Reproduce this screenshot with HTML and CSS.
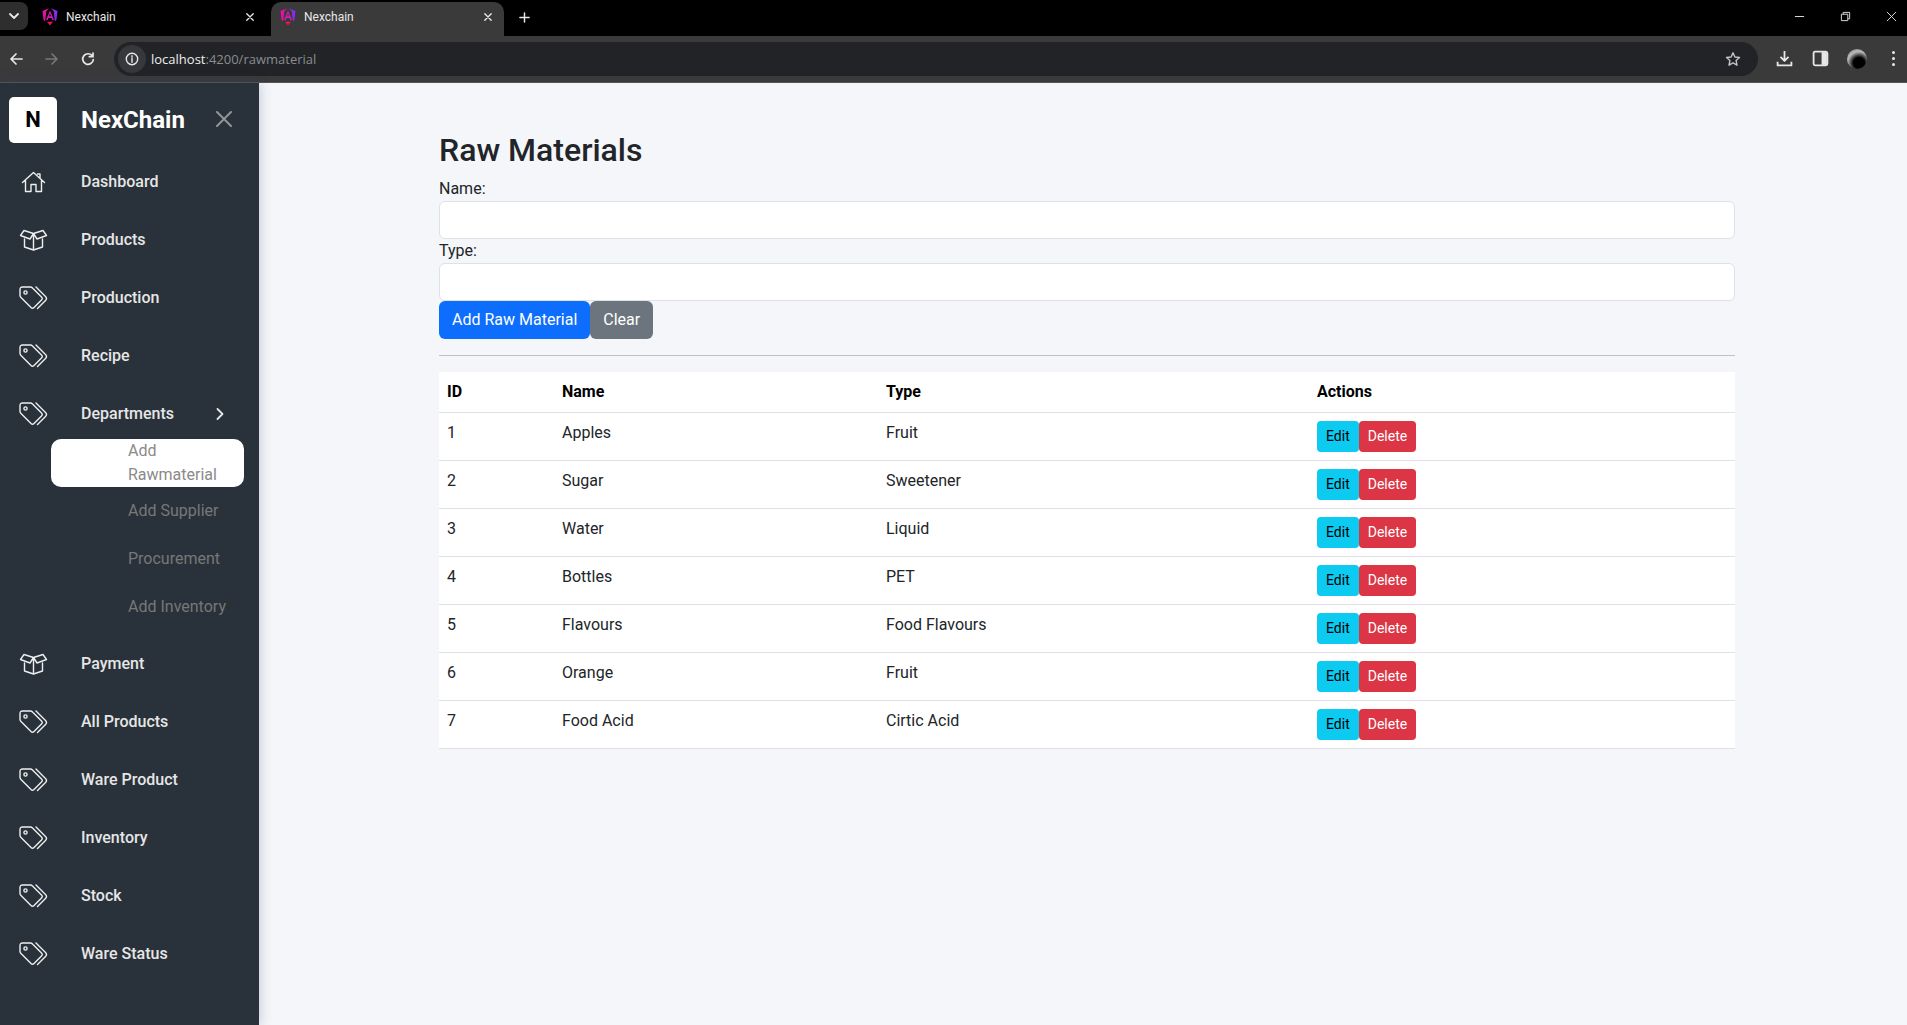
FILE: index.html
```html
<!DOCTYPE html>
<html lang="en">
<head>
    <meta charset="UTF-8">
    <meta name="viewport" content="width=device-width, initial-scale=1.0">
    <title>Nexchain</title>
    <link rel="stylesheet" href="styles.css">
</head>
<body>
    <svg class="icon-defs" aria-hidden="true">
        <defs>
            <symbol id="i-angular" viewBox="0 0 16 18">
                <path fill="#ea0fa4" d="M.5 3 7 .3 4.200 3.500 3.200 13.200 1.600 12Z"/>
                <path fill="#8a2be6" d="M15.500 3 9 .3 11.800 3.500 12.800 13.200 14.400 12Z"/>
                <path fill="#d41ab4" fill-rule="evenodd" d="M8 2.500 12 12H10.300L9.500 10H6.500L5.700 12H4ZM8 5.500 7 8.300H9Z"/>
                <path fill="#ee1058" d="M5 13.800H11L8 17.600Z"/>
            </symbol>
            <symbol id="i-house" viewBox="0 0 24 22">
                <path d="M1 11.500 12 1.500 23 11.500M18.500 7V3H16M4 9.500V20.500H9.500V13.500H14.500V20.500H20V9.500"/>
            </symbol>
            <symbol id="i-box" viewBox="0 0 28 22">
                <path d="M5 10V18L14 21 23 18V10M14 4.500V21M14 4.500 4.500 1.500 1 6.500 10.500 10ZM14 4.500 23.500 1.500 27 6.500 17.500 10Z"/>
            </symbol>
            <symbol id="i-tag" viewBox="0 0 29 24">
                <path d="M1 3.500Q1 1 3.500 1H11.500Q12.500 1 13.500 2L22.500 11Q24 12.500 22.500 14L15 21.500Q13.500 23 12 21.500L2 11.500Q1 10.500 1 9.500Z"/>
                <circle cx="6.500" cy="6.500" r="1.600"/>
                <path d="M17 1 26.500 10.500Q28.500 12.500 26.500 14.500L18.500 22.500"/>
            </symbol>
        </defs>
    </svg>

    <div class="browser-tabs">
        <div class="tab-menu">
            <svg viewBox="0 0 10 6"><path d="M1 1 5 5 9 1"/></svg>
        </div>
        <div class="tab">
            <svg class="favicon"><use href="#i-angular"/></svg>
            <span class="tab-title">Nexchain</span>
            <svg class="tab-close" viewBox="0 0 10 10"><path d="M1 1 9 9M9 1 1 9"/></svg>
        </div>
        <div class="tab tab-active">
            <svg class="favicon"><use href="#i-angular"/></svg>
            <span class="tab-title">Nexchain</span>
            <svg class="tab-close" viewBox="0 0 10 10"><path d="M1 1 9 9M9 1 1 9"/></svg>
        </div>
        <svg class="tab-new" viewBox="0 0 12 12"><path d="M6 1V11M1 6H11"/></svg>
        <div class="window-controls">
            <svg viewBox="0 0 12 12"><path d="M1 6H11"/></svg>
            <svg viewBox="0 0 12 12"><path d="M1.500 3.500H8.500V10.500H1.500ZM3.500 3.500V1.500H10.500V8.500H8.500"/></svg>
            <svg viewBox="0 0 12 12"><path d="M1 1 11 11M11 1 1 11"/></svg>
        </div>
    </div>

    <div class="browser-toolbar">
        <svg class="nav-btn" viewBox="0 0 14 14"><path d="M13 7H2M7 2 2 7 7 12"/></svg>
        <svg class="nav-btn nav-btn-off" viewBox="0 0 14 14"><path d="M1 7H12M7 2 12 7 7 12"/></svg>
        <svg class="nav-btn" viewBox="0 0 14 14"><path d="M11.500 4.200A5.300 5.300 0 1 0 12.300 7.500M12 1V4.700H8.300"/></svg>
        <div class="omnibox">
            <div class="site-info">
                <svg viewBox="0 0 14 14"><circle cx="7" cy="7" r="5.700"/><path d="M7 6.300V10.200M7 3.700V5"/></svg>
            </div>
            <span class="url-host">localhost</span><span class="url-path">:4200/rawmaterial</span>
            <svg class="star" viewBox="0 0 16 16"><path d="M8 1.800 9.900 6 14.500 6.500 11.100 9.600 12 14.200 8 11.900 4 14.200 4.900 9.600 1.500 6.500 6.100 6Z"/></svg>
        </div>
        <div class="toolbar-right">
            <svg viewBox="0 0 16 16"><path d="M8 1V10M4.200 6.500 8 10.300 11.800 6.500M1.500 11V14.500H14.500V11"/></svg>
            <svg class="panel-icon" viewBox="0 0 16 16"><rect class="panel-frame" x="1.500" y="1.500" width="13" height="13" rx="1.500"/><rect class="panel-fill" x="9" y="2" width="5" height="12"/></svg>
            <div class="avatar"></div>
            <div class="menu-dots"><i></i><i></i><i></i></div>
        </div>
    </div>

    <div class="app">
        <aside class="sidebar">
            <div class="sidebar-head">
                <div class="logo">N</div>
                <span class="brand">NexChain</span>
                <svg class="sidebar-close" viewBox="0 0 16 16"><path d="M1 1 15 15M15 1 1 15"/></svg>
            </div>
            <ul class="nav-list">
                <li class="nav-item"><svg class="nav-icon icon-house"><use href="#i-house"/></svg>Dashboard</li>
                <li class="nav-item"><svg class="nav-icon icon-box"><use href="#i-box"/></svg>Products</li>
                <li class="nav-item"><svg class="nav-icon"><use href="#i-tag"/></svg>Production</li>
                <li class="nav-item"><svg class="nav-icon"><use href="#i-tag"/></svg>Recipe</li>
                <li class="nav-item">
                    <svg class="nav-icon"><use href="#i-tag"/></svg>Departments
                    <svg class="nav-arrow" viewBox="0 0 8 12"><path d="M1.500 1 6.500 6 1.500 11"/></svg>
                </li>
                <li>
                    <ul class="sub-list">
                        <li class="sub-item sub-active">Add Rawmaterial</li>
                        <li class="sub-item">Add Supplier</li>
                        <li class="sub-item">Procurement</li>
                        <li class="sub-item">Add Inventory</li>
                    </ul>
                </li>
                <li class="nav-item"><svg class="nav-icon icon-box"><use href="#i-box"/></svg>Payment</li>
                <li class="nav-item"><svg class="nav-icon"><use href="#i-tag"/></svg>All Products</li>
                <li class="nav-item"><svg class="nav-icon"><use href="#i-tag"/></svg>Ware Product</li>
                <li class="nav-item"><svg class="nav-icon"><use href="#i-tag"/></svg>Inventory</li>
                <li class="nav-item"><svg class="nav-icon"><use href="#i-tag"/></svg>Stock</li>
                <li class="nav-item"><svg class="nav-icon"><use href="#i-tag"/></svg>Ware Status</li>
            </ul>
        </aside>

        <main class="content">
            <h1>Raw Materials</h1>
            <form class="material-form">
                <label for="name">Name:</label>
                <input type="text" id="name">
                <label for="type">Type:</label>
                <input type="text" id="type">
                <div class="form-buttons">
                    <button type="button" class="btn btn-primary">Add Raw Material</button>
                    <button type="button" class="btn btn-secondary">Clear</button>
                </div>
            </form>
            <hr>
            <table class="material-table">
                <thead>
                    <tr><th>ID</th><th>Name</th><th>Type</th><th>Actions</th></tr>
                </thead>
                <tbody>
                    <tr><td>1</td><td>Apples</td><td>Fruit</td><td><button class="btn-sm btn-info">Edit</button><button class="btn-sm btn-danger">Delete</button></td></tr>
                    <tr><td>2</td><td>Sugar</td><td>Sweetener</td><td><button class="btn-sm btn-info">Edit</button><button class="btn-sm btn-danger">Delete</button></td></tr>
                    <tr><td>3</td><td>Water</td><td>Liquid</td><td><button class="btn-sm btn-info">Edit</button><button class="btn-sm btn-danger">Delete</button></td></tr>
                    <tr><td>4</td><td>Bottles</td><td>PET</td><td><button class="btn-sm btn-info">Edit</button><button class="btn-sm btn-danger">Delete</button></td></tr>
                    <tr><td>5</td><td>Flavours</td><td>Food Flavours</td><td><button class="btn-sm btn-info">Edit</button><button class="btn-sm btn-danger">Delete</button></td></tr>
                    <tr><td>6</td><td>Orange</td><td>Fruit</td><td><button class="btn-sm btn-info">Edit</button><button class="btn-sm btn-danger">Delete</button></td></tr>
                    <tr><td>7</td><td>Food Acid</td><td>Cirtic Acid</td><td><button class="btn-sm btn-info">Edit</button><button class="btn-sm btn-danger">Delete</button></td></tr>
                </tbody>
            </table>
        </main>
    </div>
</body>
</html>
```

FILE: styles.css
```css
* {
    box-sizing: border-box;
}

body {
    font-family: Roboto, sans-serif;
    font-size: 16px;
    line-height: 24px;
    color: #212529;
    margin: 0;
    height: 100vh;
    overflow: hidden;
    display: flex;
    flex-direction: column;
    background-color: #f4f6f9;
}

ul {
    list-style: none;
    margin: 0;
    padding: 0;
}

svg {
    fill: none;
    stroke: currentColor;
    stroke-linecap: round;
    stroke-linejoin: round;
}

.icon-defs {
    width: 0;
    height: 0;
    position: absolute;
}

/* browser tab strip */
.browser-tabs {
    height: 36px;
    flex: none;
    background-color: #000;
    color: #e8e8e8;
    display: flex;
    align-items: flex-end;
    font-size: 12px;
}

.tab-menu {
    width: 28px;
    height: 28px;
    margin-top: 2px;
    border-radius: 0 8px 8px 0;
    background-color: #2e2e2e;
    display: flex;
    align-items: center;
    justify-content: center;
    align-self: flex-start;
}

.tab-menu svg {
    width: 10px;
    height: 6px;
    stroke-width: 1.8;
}

.tab {
    width: 243px;
    height: 34px;
    display: flex;
    align-items: center;
    padding: 0 17px 4px 14px;
}

.tab-active {
    width: 233px;
    padding: 0 12px 4px 9px;
    background-color: #3a3a3a;
    border-radius: 10px 10px 0 0;
}

.favicon {
    width: 16px;
    height: 18px;
    stroke: none;
    margin-right: 8px;
    flex: none;
}

.tab-title {
    flex: 1;
    line-height: 16px;
}

.tab-close {
    width: 8px;
    height: 8px;
    stroke-width: 1.7;
    flex: none;
}

.tab-new {
    width: 11px;
    height: 11px;
    margin: 0 0 13px 15px;
    stroke-width: 1.6;
}

.window-controls {
    margin-left: auto;
    height: 36px;
    display: flex;
    align-items: center;
    gap: 35px;
    padding: 0 10px 4px 0;
}

.window-controls svg {
    width: 11px;
    height: 11px;
    stroke-width: 1;
    stroke-linecap: butt;
}

/* browser address bar */
.browser-toolbar {
    height: 47px;
    flex: none;
    background-color: #3a3a3a;
    border-bottom: 1px solid #555;
    display: flex;
    align-items: center;
    color: #e8e8e8;
    padding: 0 0 1px 9px;
}

.nav-btn {
    width: 14px;
    height: 14px;
    margin-right: 22px;
    stroke-width: 1.7;
    flex: none;
}

.nav-btn-off {
    color: #777;
}

.omnibox {
    width: 1644px;
    height: 34px;
    margin-left: -3px;
    border-radius: 17px;
    background-color: #212327;
    display: flex;
    align-items: center;
    padding: 0 17px 0 4px;
    font-family: "Open Sans", sans-serif;
    font-size: 13px;
}

.site-info {
    width: 28px;
    height: 28px;
    border-radius: 50%;
    background-color: #36383b;
    display: flex;
    align-items: center;
    justify-content: center;
    margin-right: 5px;
}

.site-info svg {
    width: 14px;
    height: 14px;
    stroke-width: 1.4;
}

.url-host {
    color: #eee;
}

.url-path {
    color: #8a8c8f;
}

.star {
    width: 16px;
    height: 16px;
    margin-left: auto;
    color: #c4c4c4;
    stroke-width: 1.4;
}

.toolbar-right {
    display: flex;
    align-items: center;
    padding-left: 18px;
}

.toolbar-right svg {
    width: 17px;
    height: 17px;
    stroke-width: 1.7;
    stroke-linecap: butt;
}

.panel-icon {
    margin: 0 18px 0 19px;
}

.panel-fill {
    fill: #e8e8e8;
    stroke: none;
}

.avatar {
    width: 20px;
    height: 20px;
    border-radius: 50%;
    background: radial-gradient(circle at 60% 70%, #000 30%, #444 42%, #bbb 62%, #666 100%);
    margin-right: 25px;
}

.menu-dots {
    display: flex;
    flex-direction: column;
    gap: 3px;
}

.menu-dots i {
    width: 3px;
    height: 3px;
    border-radius: 50%;
    background-color: #e8e8e8;
}

/* app layout */
.app {
    flex: 1;
    display: flex;
    min-height: 0;
}

.sidebar {
    width: 259px;
    flex: none;
    background-color: #29323a;
    color: #e6e6e6;
    box-shadow: 0 0 12px rgba(60, 70, 120, 0.3);
    font-weight: 500;
}

.sidebar-head {
    height: 74px;
    display: flex;
    align-items: center;
    padding: 0 0 0 9px;
}

.logo {
    width: 48px;
    height: 46px;
    background-color: #fff;
    color: #000;
    font-size: 22px;
    font-weight: 700;
    border-radius: 5px;
    display: flex;
    align-items: center;
    justify-content: center;
    margin: 0 24px 0 0;
}

.brand {
    font-size: 24px;
    font-weight: 700;
    color: #fff;
    margin-right: 31px;
}

.sidebar-close {
    width: 16px;
    height: 16px;
    color: #8f9599;
    stroke-width: 2;
    margin-bottom: 2px;
}

.nav-list {
    display: flex;
    flex-direction: column;
    gap: 8px;
}

.nav-item {
    height: 50px;
    display: flex;
    align-items: center;
    padding: 0 35px 0 19px;
}

.nav-icon {
    width: 29px;
    height: 24px;
    margin-right: 33px;
    stroke-width: 1.400;
    color: #eee;
    flex: none;
}

.icon-house,
.icon-box {
    height: 22px;
}

.nav-arrow {
    width: 8px;
    height: 12px;
    margin-left: auto;
    stroke-width: 1.8;
}

.sub-list {
    margin-top: -8px;
    font-weight: 400;
    color: #777;
}

.sub-item {
    min-height: 48px;
    margin-left: 51px;
    width: 193px;
    padding: 0 12px 0 77px;
    display: flex;
    align-items: center;
}

.sub-active {
    background-color: #fff;
    border-radius: 10px;
    color: #8a8a8a;
}

/* main content */
.content {
    flex: 1;
    padding: 48px 0 0 180px;
    min-width: 0;
}

.content > * {
    width: 1296px;
}

h1 {
    font-size: 32px;
    font-weight: 500;
    line-height: 38.4px;
    margin: 0 0 8px;
}

.material-form label {
    display: block;
}

.material-form input {
    display: block;
    width: 100%;
    height: 38px;
    border: 1px solid #dee2e6;
    border-radius: 6px;
    background-color: #fff;
}

.form-buttons {
    display: flex;
}

.btn,
.btn-sm {
    font-family: Roboto, sans-serif;
    border: 1px solid transparent;
    border-radius: 6px;
}

.btn {
    height: 38px;
    font-size: 16px;
    padding: 0 12px 2px;
    color: #fff;
}

.btn-sm {
    height: 31px;
    font-size: 14px;
    padding: 0 8px 2px;
    border-radius: 4px;
}

.btn-primary {
    background-color: #0d6efd;
}

.btn-secondary {
    background-color: #6c757d;
}

.btn-info {
    background-color: #0dcaf0;
    color: #000;
}

.btn-danger {
    background-color: #dc3545;
    color: #fff;
}

hr {
    margin: 16px 0;
    border: 0;
    border-top: 1px solid #bfc2c5;
}

.material-table {
    border-collapse: collapse;
    table-layout: fixed;
    background-color: #fff;
}

.material-table th,
.material-table td {
    text-align: left;
    vertical-align: top;
    padding: 8px;
    border-bottom: 1px solid #dee2e6;
    color: #212529;
}

.material-table th {
    font-weight: 700;
    color: #000;
}

.material-table th:nth-child(1) {
    width: 115px;
}

.material-table th:nth-child(2) {
    width: 324px;
}

.material-table th:nth-child(3) {
    width: 431px;
}
```
